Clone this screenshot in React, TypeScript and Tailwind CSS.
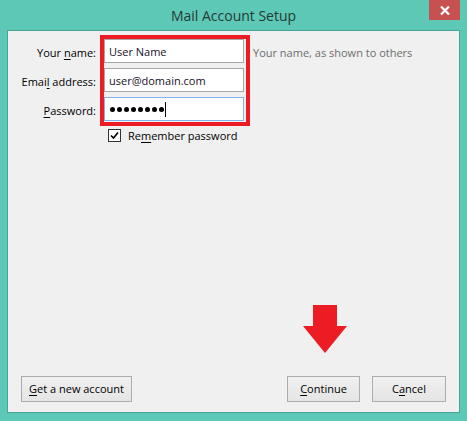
import React from "react";

const font = { fontFamily: '"Open Sans", "Noto Sans", Arial, sans-serif' };

function U({ children }: { children: React.ReactNode }) {
  return <span className="underline underline-offset-2 decoration-1">{children}</span>;
}

function Btn({ children, w }: { children: React.ReactNode; w: string }) {
  return (
    <div
      className={`${w} h-[26px] border border-[#adadad] bg-gradient-to-b from-[#f0f0f0] to-[#e5e5e5] flex items-center justify-center text-[11px] text-black`}
    >
      {children}
    </div>
  );
}

export default function App() {
  return (
    <div
      className="w-[467px] h-[421px] bg-[#5cc8b5] flex flex-col overflow-hidden"
      style={font}
    >
      <div className="h-[30px] relative flex items-center justify-center shrink-0">
        <span className="text-[14px] text-[#263a36]">Mail Account Setup</span>
        <div className="absolute top-0 right-[7px] w-[31px] h-[20px] bg-[#c75050] flex items-center justify-center">
          <svg width="10" height="9" viewBox="0 0 10 9">
            <path d="M1 0.5 L9 8.5 M9 0.5 L1 8.5" stroke="white" strokeWidth="2.2" />
          </svg>
        </div>
      </div>
      <div className="mx-[7px] mb-[8px] flex-1 border border-[#46a595] bg-[#f0f0f0] flex flex-col">
        <div className="flex pt-[4px]">
          <div className="w-[88px] pt-[5px] flex flex-col gap-[5px] text-[11px] text-black">
            <div className="h-[24px] flex items-center justify-end pt-[2px]">
              Your&nbsp;<U>n</U>ame:
            </div>
            <div className="h-[24px] flex items-center justify-end pt-[2px]">
              Emai<U>l</U>&nbsp;address:
            </div>
            <div className="h-[24px] flex items-center justify-end pt-[2px]">
              <U>P</U>assword:
            </div>
          </div>
          <div className="ml-[4px] border-4 border-[#ed1c24] pr-[2px] pb-[1px] flex flex-col gap-[5px]">
            <div className="w-[140px] h-[24px] border border-[#a8a8a8] bg-white flex items-center pl-[4px] pt-[2px] text-[11px] text-[#1a1028]">
              User Name
            </div>
            <div className="w-[140px] h-[24px] border border-[#a8a8a8] bg-white flex items-center pl-[4px] pt-[2px] text-[11px] text-[#1a1028]">
              user@domain.com
            </div>
            <div className="w-[140px] h-[24px] border border-[#7eb4ea] bg-white flex items-center pl-[5px]">
              <div className="flex gap-[2px] items-center">
                {Array.from({ length: 8 }).map((_, i) => (
                  <span key={i} className="w-[5px] h-[5px] rounded-full bg-black" />
                ))}
              </div>
              <span className="ml-[1px] w-[1px] h-[15px] bg-black" />
            </div>
          </div>
          <div className="ml-[3px] h-[34px] flex items-center pt-[3px] text-[11px] text-[#6d6d6d]">
            Your name, as shown to others
          </div>
        </div>
        <div className="flex items-center ml-[100px] mt-[3px] h-[13px]">
          <div className="w-[13px] h-[13px] border border-[#333] bg-white flex items-center justify-center">
            <svg width="9" height="9" viewBox="0 0 9 9">
              <path d="M1 4.5 L3.5 7 L8 1.5" stroke="black" strokeWidth="1.6" fill="none" />
            </svg>
          </div>
          <span className="ml-[7px] pt-[1px] text-[11px] text-black">
            Re<U>m</U>ember password
          </span>
        </div>
        <div className="flex-1" />
        <div className="flex justify-end mr-[112px] mb-[23px]">
          <svg width="44" height="48" viewBox="0 0 44 48">
            <path d="M10 0 H34 V21 H44 L22 48 L0 21 H10 Z" fill="#ed1c24" />
          </svg>
        </div>
        <div className="flex items-center px-[13px] pb-[10px]">
          <Btn w="w-[111px]">
            <span>
              <U>G</U>et a new account
            </span>
          </Btn>
          <div className="flex-1" />
          <Btn w="w-[73px]">
            <span>
              <U>C</U>ontinue
            </span>
          </Btn>
          <div className="w-[12px]" />
          <Btn w="w-[74px]">
            <span>
              C<U>a</U>ncel
            </span>
          </Btn>
        </div>
      </div>
    </div>
  );
}
